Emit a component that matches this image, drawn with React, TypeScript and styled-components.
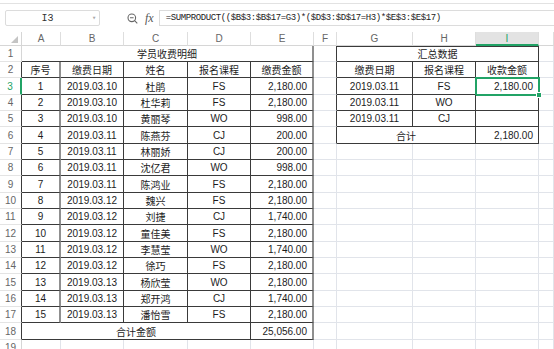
import React from 'react';
import styled, { createGlobalStyle } from 'styled-components';

const GREEN = '#21a366';
const DARK = '#3a3a3a';
const GRAY = '#8f8f8f';
const GRID = '#e1e4ea';

type Edge = 'grid' | 'dark' | 'gray' | 'none';

const edge = (e: Edge) => {
  if (e === 'dark') return `1px solid ${DARK}`;
  if (e === 'gray') return `2px solid ${GRAY}`;
  if (e === 'none') return '0';
  return `1px solid ${GRID}`;
};

const GlobalStyle = createGlobalStyle`
  html, body {
    margin: 0;
    padding: 0;
    background: #fff;
    overflow: hidden;
  }
  body {
    font-family: "Liberation Sans", Arial, sans-serif;
  }
`;

const Window = styled.div`
  width: 554px;
  height: 349px;
  overflow: hidden;
  display: flex;
  flex-direction: column;
  background: #fff;
`;

const TopStrip = styled.div`
  height: 3px;
  flex-shrink: 0;
  border-bottom: 1px solid #e2e2e2;
`;

const FormulaBar = styled.div`
  height: 28px;
  flex-shrink: 0;
  display: flex;
  align-items: center;
  padding-left: 5px;
`;

const NameBox = styled.div`
  box-sizing: border-box;
  width: 95px;
  height: 16px;
  border: 1px solid #dcdcdc;
  border-radius: 2px;
  display: grid;
  grid-template-columns: 1fr 10px;
  align-items: center;
  font-family: "Liberation Mono", monospace;
  font-size: 10px;
  color: #333;
  text-align: center;
`;

const Caret = styled.span`
  font-size: 7px;
  color: #aaa;
  line-height: 1;
`;

const Tools = styled.div`
  display: flex;
  align-items: center;
  gap: 7px;
  margin-left: 27px;
  color: #666;
`;

const Fx = styled.span`
  font-family: "Liberation Serif", serif;
  font-style: italic;
  font-size: 12px;
  color: #555;
`;

const FormulaInput = styled.div`
  box-sizing: border-box;
  flex: 1;
  height: 16px;
  margin-left: 5px;
  border: 1px solid #dcdcdc;
  border-right: 0;
  padding-left: 6px;
  display: flex;
  align-items: center;
  font-family: "Liberation Mono", monospace;
  font-size: 9px;
  letter-spacing: -0.4px;
  color: #222;
  white-space: nowrap;
  overflow: hidden;
`;

const ROWS = [16, 16, 17, 16, 16, 17, 16, 16, 17, 16, 16, 17, 16, 16, 17, 16, 16, 17, 16];

const Sheet = styled.div`
  display: grid;
  grid-template-columns: 22px 39px 63px 64px 63px 63px 23px 76px 63px 63px 1fr;
  grid-template-rows: 14px ${ROWS.map(h => `${h}px`).join(' ')};
`;

const Corner = styled.div`
  box-sizing: border-box;
  border-right: 1px solid #d6d6d6;
  border-bottom: 1px solid #d6d6d6;
  display: flex;
  align-items: flex-end;
  justify-content: flex-end;
  padding: 0 3px 2px 0;
`;

const ColHead = styled.div<{ $active?: boolean }>`
  box-sizing: border-box;
  border-right: 1px solid #dedede;
  border-bottom: ${p => (p.$active ? `2px solid ${GREEN}` : '1px solid #d6d6d6')};
  background: ${p => (p.$active ? '#e3e3e3' : '#fff')};
  color: ${p => (p.$active ? GREEN : '#666')};
  font-size: 10px;
  display: flex;
  align-items: center;
  justify-content: center;
`;

const RowHead = styled.div<{ $active?: boolean; $table?: boolean }>`
  box-sizing: border-box;
  border-right: ${p =>
    p.$active ? `2px solid ${GREEN}` : p.$table ? `1px solid ${DARK}` : '1px solid #d6d6d6'};
  border-bottom: 1px solid #e4e4e4;
  color: ${p => (p.$active ? GREEN : '#666')};
  font-size: 10px;
  display: flex;
  align-items: center;
  justify-content: center;
`;

const Cell = styled.div<{
  $span?: number;
  $r?: Edge;
  $b?: Edge;
  $top?: boolean;
  $right?: boolean;
  $cjk?: boolean;
  $selected?: boolean;
}>`
  grid-column: span ${p => p.$span ?? 1};
  position: relative;
  box-sizing: border-box;
  border-right: ${p => edge(p.$r ?? 'grid')};
  border-bottom: ${p => edge(p.$b ?? 'grid')};
  box-shadow: ${p => (p.$top ? `inset 0 1px 0 ${DARK}` : 'none')};
  display: flex;
  align-items: center;
  justify-content: ${p => (p.$right ? 'flex-end' : 'center')};
  padding-right: ${p => (p.$right ? '5px' : '0')};
  font-family: ${p =>
    p.$cjk ? '"Noto Sans CJK SC", "Noto Sans", sans-serif' : '"Liberation Sans", Arial, sans-serif'};
  font-size: 10px;
  color: #1c1c1c;
  white-space: nowrap;

  ${p =>
    p.$selected &&
    `
    &::after {
      content: '';
      position: absolute;
      left: -1px;
      top: -1px;
      right: -2px;
      bottom: -2px;
      border: 2px solid ${GREEN};
      pointer-events: none;
    }
    &::before {
      content: '';
      position: absolute;
      right: -4px;
      bottom: -4px;
      width: 4px;
      height: 4px;
      background: ${GREEN};
      border: 1px solid #fff;
      z-index: 2;
    }
  `}
`;

const records = [
  ['1', '2019.03.10', '杜鹃', 'FS', '2,180.00'],
  ['2', '2019.03.10', '杜华莉', 'FS', '2,180.00'],
  ['3', '2019.03.10', '黄丽琴', 'WO', '998.00'],
  ['4', '2019.03.11', '陈燕芬', 'CJ', '200.00'],
  ['5', '2019.03.11', '林丽娇', 'CJ', '200.00'],
  ['6', '2019.03.11', '沈亿君', 'WO', '998.00'],
  ['7', '2019.03.11', '陈鸿业', 'FS', '2,180.00'],
  ['8', '2019.03.12', '魏兴', 'FS', '2,180.00'],
  ['9', '2019.03.12', '刘捷', 'CJ', '1,740.00'],
  ['10', '2019.03.12', '童佳美', 'FS', '2,180.00'],
  ['11', '2019.03.12', '李慧莹', 'WO', '1,740.00'],
  ['12', '2019.03.12', '徐巧', 'FS', '2,180.00'],
  ['13', '2019.03.13', '杨欣莹', 'WO', '2,180.00'],
  ['14', '2019.03.13', '郑开鸿', 'CJ', '1,740.00'],
  ['15', '2019.03.13', '潘怡雪', 'FS', '2,180.00'],
];

const summary = [
  ['2019.03.11', 'FS', '2,180.00'],
  ['2019.03.11', 'WO', ''],
  ['2019.03.11', 'CJ', ''],
];

const letters = ['A', 'B', 'C', 'D', 'E', 'F', 'G', 'H', 'I', ''];

const ZoomIcon = () => (
  <svg width="11" height="11" viewBox="0 0 11 11" fill="none" stroke="#666" strokeWidth="1.1">
    <circle cx="4.8" cy="4.8" r="3.8" />
    <path d="M3 4.8h3.6M7.6 7.6L10.3 10.3" />
  </svg>
);

const CornerMark = () => (
  <svg width="7" height="7" viewBox="0 0 7 7">
    <path d="M7 0V7H0Z" fill="#c4c4c4" />
  </svg>
);

const SummaryRow: React.FC<{ row: number }> = ({ row }) => {
  // rows 1..6 hold the summary block in G:I, others are empty grid
  if (row === 1)
    return (
      <Cell $span={3} $cjk $r="dark" $b="dark" $top>
        汇总数据
      </Cell>
    );
  if (row === 2)
    return (
      <>
        <Cell $cjk $r="dark" $b="dark">缴费日期</Cell>
        <Cell $cjk $r="dark" $b="dark">报名课程</Cell>
        <Cell $cjk $r="dark" $b="dark">收款金额</Cell>
      </>
    );
  if (row >= 3 && row <= 5) {
    const [d, c, m] = summary[row - 3];
    return (
      <>
        <Cell $r="dark" $b="dark">{d}</Cell>
        <Cell $r="dark" $b="dark">{c}</Cell>
        <Cell $r="dark" $b="dark" $right $selected={row === 3}>{m}</Cell>
      </>
    );
  }
  if (row === 6)
    return (
      <>
        <Cell $span={2} $cjk $r="dark" $b="dark">合计</Cell>
        <Cell $r="dark" $b="dark" $right>2,180.00</Cell>
      </>
    );
  return (
    <>
      <Cell />
      <Cell />
      <Cell />
    </>
  );
};

const App: React.FC = () => {
  return (
    <Window>
      <GlobalStyle />
      <TopStrip />
      <FormulaBar>
        <NameBox>
          <span>I3</span>
          <Caret>▾</Caret>
        </NameBox>
        <Tools>
          <ZoomIcon />
          <Fx>fx</Fx>
        </Tools>
        <FormulaInput>=SUMPRODUCT(($B$3:$B$17=G3)*($D$3:$D$17=H3)*$E$3:$E$17)</FormulaInput>
      </FormulaBar>

      <Sheet>
        <Corner>
          <CornerMark />
        </Corner>
        {letters.map((l, i) => (
          <ColHead key={i} $active={l === 'I'}>{l}</ColHead>
        ))}

        {/* row 1 */}
        <RowHead>1</RowHead>
        <Cell $span={5} $cjk $r="gray" $b="dark">学员收费明细</Cell>
        <Cell $r="dark" />
        <SummaryRow row={1} />
        <Cell />

        {/* row 2 */}
        <RowHead $table>2</RowHead>
        <Cell $cjk $r="gray" $b="dark">序号</Cell>
        <Cell $cjk $r="dark" $b="dark">缴费日期</Cell>
        <Cell $cjk $r="dark" $b="dark">姓名</Cell>
        <Cell $cjk $r="dark" $b="dark">报名课程</Cell>
        <Cell $cjk $r="gray" $b="dark">缴费金额</Cell>
        <Cell $r="dark" />
        <SummaryRow row={2} />
        <Cell />

        {records.map((rec, i) => {
          const row = i + 3;
          return (
            <React.Fragment key={row}>
              <RowHead $table $active={row === 3}>{row}</RowHead>
              <Cell $r="gray" $b="dark">{rec[0]}</Cell>
              <Cell $r="dark" $b="dark">{rec[1]}</Cell>
              <Cell $cjk $r="dark" $b="dark">{rec[2]}</Cell>
              <Cell $r="dark" $b="dark">{rec[3]}</Cell>
              <Cell $r="gray" $b="dark" $right>{rec[4]}</Cell>
              <Cell $r={row <= 6 ? 'dark' : 'grid'} />
              <SummaryRow row={row} />
              <Cell />
            </React.Fragment>
          );
        })}

        {/* row 18 */}
        <RowHead $table>18</RowHead>
        <Cell $span={4} $cjk $r="dark" $b="dark">合计金额</Cell>
        <Cell $r="gray" $b="dark" $right>25,056.00</Cell>
        <Cell />
        <SummaryRow row={18} />
        <Cell />

        {/* row 19 */}
        <RowHead>19</RowHead>
        {Array.from({ length: 10 }).map((_, i) => (
          <Cell key={i} />
        ))}
      </Sheet>
    </Window>
  );
};

export default App;
